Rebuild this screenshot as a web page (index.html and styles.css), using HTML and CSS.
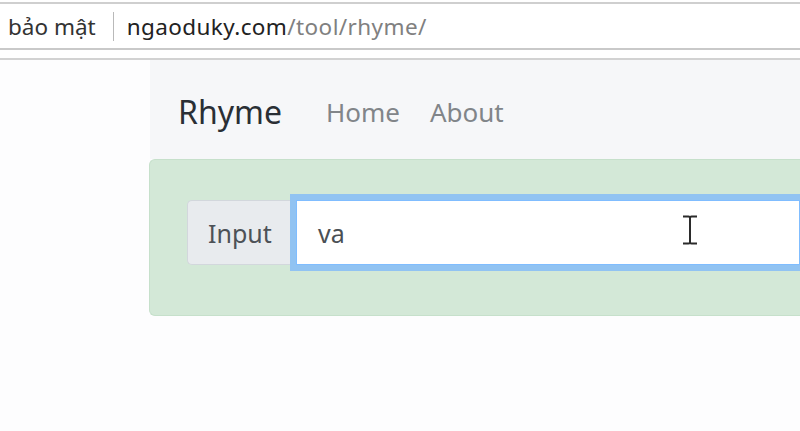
FILE: index.html
```html
<!DOCTYPE html>
<html lang="vi">
<head>
<meta charset="utf-8">
<title>Rhyme</title>
<link rel="stylesheet" href="styles.css">
</head>
<body>
<div class="chrome">
  <div class="omnibox">
    <span class="secure">bảo mật</span>
    <span class="sep"></span>
    <span class="url"><span class="host">ngaoduky.com</span><span class="path">/tool/rhyme/</span></span>
  </div>
</div>
<div class="page">
  <div class="gutter"></div>
  <div class="container">
    <nav class="navbar">
      <span class="brand">Rhyme</span>
      <a class="nav-link">Home</a>
      <a class="nav-link">About</a>
    </nav>
    <div class="alert">
      <div class="input-group">
        <span class="addon">Input</span>
        <div class="field">va</div>
      </div>
    </div>
  </div>
  <svg class="ibeam" width="16" height="30" viewBox="0 0 16 30">
    <path d="M1 1.5h5.5M9.5 1.5H15M8 2v26M1 28.5h5.5M9.5 28.5H15M6.5 1.5Q8 1.5 8 3M9.5 1.5Q8 1.5 8 3M6.5 28.5Q8 28.5 8 27M9.5 28.5Q8 28.5 8 27" stroke="#2b2b2b" stroke-width="2" fill="none"/>
  </svg>
</div>
</body>
</html>
```
FILE: styles.css
```css
html, body {
  margin: 0;
  padding: 0;
  background: #fdfdfe;
  overflow: hidden;
  font-family: "Noto Sans", "Open Sans", sans-serif;
}
.chrome {
  height: 60px;
  background: #ffffff;
  box-sizing: border-box;
  border-bottom: 2px solid #d2d2d2;
  padding-top: 2px;
}
.omnibox {
  height: 48px;
  box-sizing: border-box;
  border-top: 2px solid #cfcfcf;
  border-bottom: 2px solid #c9c9c9;
  display: flex;
  align-items: center;
  padding-left: 8px;
  font-size: 22.5px;
  white-space: nowrap;
}
.secure {
  color: #333;
}
.sep {
  width: 1px;
  height: 29px;
  background: #b9b9b9;
  margin: 0 13px 0 17px;
}
.url { letter-spacing: 0.4px; }
.host { color: #222; }
.path { color: #808080; }
.page {
  position: relative;
  display: flex;
  height: 371px;
}
.gutter {
  width: 149px;
  flex: none;
}
.container {
  flex: 1;
  min-width: 0;
  display: flex;
  flex-direction: column;
}
.navbar {
  margin-left: 1px;
  height: 99px;
  background: #f6f7f9;
  display: flex;
  align-items: center;
  padding-left: 28px;
  padding-top: 4px;
  box-sizing: border-box;
}
.brand {
  font-size: 32px;
  color: #2a2f35;
  margin-right: 44px;
}
.nav-link {
  font-size: 26px;
  color: #818589;
  margin-right: 30px;
}
.alert {
  background: #d3e8d7;
  border: 1px solid #c6e0cb;
  border-right: none;
  border-radius: 6px 0 0 6px;
  height: 157px;
  box-sizing: border-box;
  padding: 40px 0 0 37px;
}
.input-group {
  display: flex;
  height: 65px;
}
.addon {
  width: 109px;
  box-sizing: border-box;
  background: #e8ebee;
  border: 1px solid #d2d7dc;
  border-right: none;
  border-radius: 5px 0 0 5px;
  display: flex;
  align-items: center;
  padding-left: 20px;
  font-size: 25px;
  color: #4d5257;
}
.field {
  flex: 1;
  background: #fff;
  border: 1px solid #80bdff;
  box-shadow: 0 0 0 6px #91c3f2;
  display: flex;
  align-items: center;
  padding-left: 21px;
  font-size: 25px;
  color: #4a4f54;
}
.ibeam {
  position: absolute;
  left: 682px;
  top: 155px;
}
```
